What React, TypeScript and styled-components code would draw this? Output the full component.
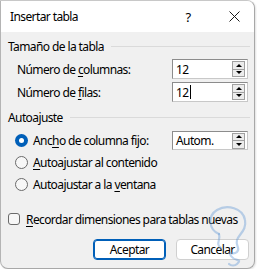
import React from 'react';
import styled, { createGlobalStyle } from 'styled-components';

const GlobalStyle = createGlobalStyle`
  html, body {
    margin: 0;
    padding: 0;
    background: #ffffff;
  }
  body {
    font-family: 'Noto Sans', 'Liberation Sans', sans-serif;
    font-size: 12px;
    letter-spacing: -0.6px;
    color: #000000;
    white-space: nowrap;
  }
`;

const Window = styled.div`
  position: relative;
  width: 253px;
  height: 267px;
  background: #f0f0f0;
  border: 1px solid #a8a8a8;
  border-top-color: #c8c8c8;
  border-left-color: #b4b4b4;
  border-radius: 0 8px 8px 8px;
  overflow: hidden;
  box-shadow: 1px 1px 2px rgba(0, 0, 0, 0.12);
`;

const TitleBar = styled.div`
  height: 31px;
  background: #ffffff;
  display: flex;
  align-items: center;
  padding-left: 9px;
`;

const Title = styled.div`
  flex: 1;
  font-size: 12px;
  padding-bottom: 1px;
`;

const TitleButton = styled.div<{ $w: number }>`
  width: ${(p) => p.$w}px;
  height: 31px;
  display: flex;
  align-items: center;
  justify-content: center;
  font-size: 13px;
`;

const Body = styled.div`
  padding: 6px 4px 0 7px;
  display: flex;
  flex-direction: column;
`;

const GroupHeader = styled.div<{ $top: number }>`
  display: flex;
  align-items: center;
  height: 16px;
  margin-top: ${(p) => p.$top}px;
  &::after {
    content: '';
    flex: 1;
    height: 1px;
    margin-left: 7px;
    background: #dadada;
  }
`;

const FieldRow = styled.div<{ $top: number; $h?: number }>`
  display: flex;
  align-items: center;
  height: ${(p) => p.$h ?? 20}px;
  margin-top: ${(p) => p.$top}px;
  padding-left: 9px;
`;

const Label = styled.div`
  flex: 1;
  display: flex;
  align-items: center;
`;

const Key = styled.span`
  text-decoration: underline;
  text-underline-offset: 2px;
`;

const SpinBox = styled.div<{ $h: number }>`
  width: 76px;
  height: ${(p) => p.$h}px;
  background: #ffffff;
  border: 1px solid #7a7a7a;
  border-color: #8c8c8c #c8c8c8 #c8c8c8 #8c8c8c;
  display: flex;
  align-items: center;
  padding-left: 3px;
  padding-right: 2px;
  box-sizing: border-box;
  margin-right: 2px;
`;

const SpinValue = styled.div`
  flex: 1;
  display: flex;
  align-items: center;
`;

const Caret = styled.span`
  display: inline-block;
  width: 1px;
  height: 14px;
  background: #000;
  margin-left: 1px;
`;

const SpinButtons = styled.div`
  width: 13px;
  height: 16px;
  border: 1px solid #a0a0a0;
  box-sizing: border-box;
  display: flex;
  flex-direction: column;
  background: #ececec;
`;

const SpinHalf = styled.div<{ $up?: boolean }>`
  flex: 1;
  display: flex;
  align-items: center;
  justify-content: center;
  border-bottom: ${(p) => (p.$up ? '1px solid #a0a0a0' : 'none')};
  &::before {
    content: '';
    width: 0;
    height: 0;
    border-left: 3px solid transparent;
    border-right: 3px solid transparent;
    ${(p) =>
      p.$up ? 'border-bottom: 3px solid #000;' : 'border-top: 3px solid #000;'}
  }
`;

const Radio = styled.div<{ $checked?: boolean }>`
  width: 13px;
  height: 13px;
  border-radius: 50%;
  box-sizing: border-box;
  margin-right: 5px;
  margin-left: -2px;
  display: flex;
  align-items: center;
  justify-content: center;
  background: ${(p) => (p.$checked ? '#005fb8' : '#f7f7f7')};
  border: ${(p) => (p.$checked ? 'none' : '1px solid #6a6a6a')};
  &::after {
    content: '';
    display: ${(p) => (p.$checked ? 'block' : 'none')};
    width: 5px;
    height: 5px;
    border-radius: 50%;
    background: #ffffff;
  }
`;

const Checkbox = styled.div`
  width: 12px;
  height: 12px;
  border: 1px solid #6a6a6a;
  border-radius: 3px;
  box-sizing: border-box;
  background: #f7f7f7;
  margin-right: 6px;
`;

const CheckRow = styled.div`
  display: flex;
  align-items: center;
  height: 16px;
  margin-top: 17px;
`;

const Buttons = styled.div`
  display: flex;
  justify-content: flex-end;
  gap: 10px;
  margin-top: 12px;
  padding-right: 1px;
`;

const Button = styled.div<{ $primary?: boolean }>`
  width: 73px;
  height: 21px;
  box-sizing: border-box;
  background: #ffffff;
  border-radius: 4px;
  border: 1px solid ${(p) => (p.$primary ? '#005fb8' : '#d0d0d0')};
  box-shadow: ${(p) => (p.$primary ? 'inset 0 0 0 1px #005fb8' : 'none')};
  display: flex;
  align-items: center;
  justify-content: center;
`;

const Watermark = styled.svg`
  position: absolute;
  left: 196px;
  top: 203px;
  width: 60px;
  height: 64px;
  pointer-events: none;
`;

function SpinField({ value, caret, h }: { value: string; caret?: boolean; h: number }) {
  return (
    <SpinBox $h={h}>
      <SpinValue>
        {value}
        {caret && <Caret />}
      </SpinValue>
      <SpinButtons>
        <SpinHalf $up />
        <SpinHalf />
      </SpinButtons>
    </SpinBox>
  );
}

export default function App() {
  return (
    <>
      <GlobalStyle />
      <Window>
        <TitleBar>
          <Title>Insertar tabla</Title>
          <TitleButton $w={52}>?</TitleButton>
          <TitleButton $w={40}>
            <svg width="11" height="11" viewBox="0 0 11 11">
              <path d="M0.5 0.5 L10.5 10.5 M10.5 0.5 L0.5 10.5" stroke="#1a1a1a" strokeWidth="1" />
            </svg>
          </TitleButton>
        </TitleBar>
        <Body>
          <GroupHeader $top={0}>Tamaño de la tabla</GroupHeader>
          <FieldRow $top={5}>
            <Label>
              Número de&nbsp;<Key>c</Key>olumnas:
            </Label>
            <SpinField value="12" h={20} />
          </FieldRow>
          <FieldRow $top={3}>
            <Label>
              Número de&nbsp;<Key>f</Key>ilas:
            </Label>
            <SpinField value="12" caret h={20} />
          </FieldRow>
          <GroupHeader $top={7}>Autoajuste</GroupHeader>
          <FieldRow $top={6} $h={19}>
            <Label>
              <Radio $checked />
              Anc<Key>h</Key>o de columna fijo:
            </Label>
            <SpinField value="Autom." h={19} />
          </FieldRow>
          <FieldRow $top={3} $h={19}>
            <Label>
              <Radio />
              <Key>A</Key>utoajustar al contenido
            </Label>
          </FieldRow>
          <FieldRow $top={3} $h={19}>
            <Label>
              <Radio />
              Autoajustar a la&nbsp;<Key>v</Key>entana
            </Label>
          </FieldRow>
          <CheckRow>
            <Checkbox />
            <span>
              <Key>R</Key>ecordar dimensiones para tablas nuevas
            </span>
          </CheckRow>
          <Buttons>
            <Button $primary>Aceptar</Button>
            <Button>Cancelar</Button>
          </Buttons>
        </Body>
        <Watermark viewBox="0 0 60 64">
          <path
            d="M22 30 C12 26 10 12 20 6 C30 0 46 4 48 16 C50 26 42 30 40 36 C38 42 44 44 40 48 C36 52 30 46 34 52 C38 58 46 54 40 60 C38 62 34 62 32 60"
            fill="none"
            stroke="#6f9fd8"
            strokeOpacity="0.45"
            strokeWidth="2.2"
            strokeLinecap="round"
          />
          <path
            d="M22 30 C24 36 18 40 24 44"
            fill="none"
            stroke="#6f9fd8"
            strokeOpacity="0.45"
            strokeWidth="2.2"
            strokeLinecap="round"
          />
        </Watermark>
      </Window>
    </>
  );
}
